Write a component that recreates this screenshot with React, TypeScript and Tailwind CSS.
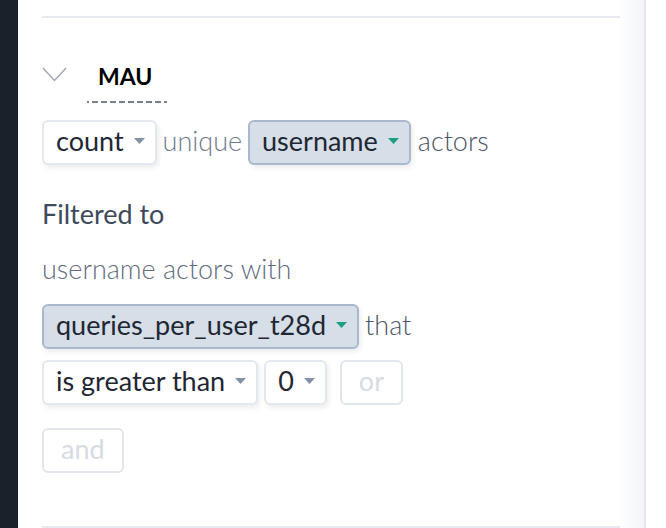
import React from "react";

function Caret({ green }: { green?: boolean }) {
  return (
    <svg width="11" height="6" viewBox="0 0 11 6" className="ml-[10px] shrink-0">
      <path d="M0 0 L11 0 L5.5 6 Z" fill={green ? "#1a9f80" : "#8591a6"} />
    </svg>
  );
}

function Select({ label, active }: { label: string; active?: boolean }) {
  return (
    <div
      className={
        "flex h-[45px] items-center rounded-[6px] border-2 pb-[3px] pl-[12px] pr-[10px] text-[#1f2733] shadow-[2px_3px_4px_rgba(30,40,60,0.08)] " +
        (active ? "border-[#a9b8cc] bg-[#d6dee8]" : "border-[#e3e7ee] bg-white")
      }
    >
      <span className="leading-[32px]">{label}</span>
      <Caret green={active} />
    </div>
  );
}

function GhostButton({ label }: { label: string }) {
  return (
    <div className="flex h-[45px] items-center rounded-[6px] border-2 border-[#e1e5ec] px-[17px] pb-[3px] text-[#d6dbe4]">
      <span className="leading-[32px]">{label}</span>
    </div>
  );
}

export default function App() {
  return (
    <div
      className="flex h-[528px] w-[666px] overflow-hidden bg-white text-[27px]"
      style={{ fontFamily: "Lato, 'Open Sans', sans-serif" }}
    >
      <div className="w-[18px] shrink-0 bg-[#1b212b]" />
      <div className="flex w-[626px] shrink-0 flex-col bg-gradient-to-r from-white from-[96%] to-[#f3f5f8]">
        <div className="ml-[24px] mt-[16px] h-[2px] w-[578px] bg-[#e6e9ef]" />
        <div className="flex flex-1 flex-col pl-[24px]">
          <div className="mt-[44px] flex items-start">
            <svg width="25" height="15" viewBox="0 0 25 15" className="mt-[5px]">
              <path d="M1 1 L12.5 13.5 L24 1" fill="none" stroke="#9aa5b8" strokeWidth="1.3" />
            </svg>
            <span className="ml-[31px] text-[23px] font-bold leading-[28px] text-black">MAU</span>
          </div>
          <svg width="80" height="2" viewBox="0 0 80 2" className="ml-[45px] mt-[11px] block">
            <line x1="0" y1="1" x2="80" y2="1" stroke="#4a5568" strokeWidth="1.6" strokeDasharray="6 3" strokeDashoffset="4" />
          </svg>
          <div className="mt-[17px] flex items-center">
            <Select label="count" />
            <span className="ml-[6px] pb-[3px] font-light text-[#6e7b90]">unique</span>
            <div className="ml-[6px]">
              <Select label="username" active />
            </div>
            <span className="ml-[7px] pb-[3px] font-light text-[#4a566a]">actors</span>
          </div>
          <div className="mt-[32px] leading-[34px] text-[#3d4a5c]">Filtered to</div>
          <div className="mt-[21px] font-light leading-[34px] text-[#5f6c80]">username actors with</div>
          <div className="mt-[18px] flex items-center">
            <Select label="queries_per_user_t28d" active />
            <span className="ml-[6px] pb-[3px] font-light text-[#4a566a]">that</span>
          </div>
          <div className="mt-[11px] flex items-center">
            <Select label="is greater than" />
            <div className="ml-[6px]">
              <Select label="0" />
            </div>
            <div className="ml-[13px]">
              <GhostButton label="or" />
            </div>
          </div>
          <div className="mt-[23px] flex">
            <GhostButton label="and" />
          </div>
        </div>
        <div className="ml-[24px] h-[2px] w-[578px] bg-[#e6e9ef]" />
      </div>
      <div className="w-[2px] shrink-0 bg-[#e3e7ee]" />
      <div className="flex-1 bg-white" />
    </div>
  );
}
